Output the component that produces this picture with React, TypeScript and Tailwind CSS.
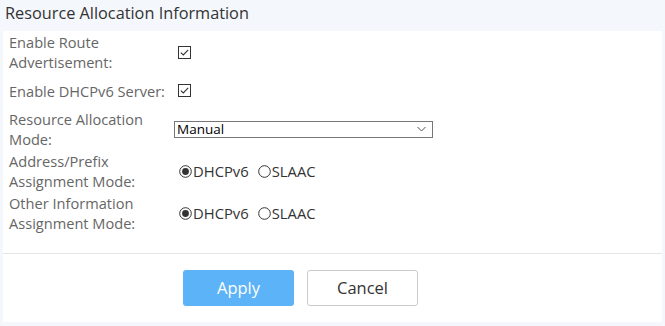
const FONT = { fontFamily: '"Open Sans", "Noto Sans", Arial, sans-serif' };

function CheckBox() {
  return (
    <svg width="13" height="13" viewBox="0 0 13 13" className="block">
      <rect x="0.5" y="0.5" width="12" height="12" fill="#fff" stroke="#333" />
      <path d="M2.8 6.6 L5.3 9 L10.2 3.8" fill="none" stroke="#333" strokeWidth="1.1" />
    </svg>
  );
}

function Radio({ checked }: { checked?: boolean }) {
  return (
    <svg width="13" height="13" viewBox="0 0 13 13" className="block">
      <circle cx="6.5" cy="6.5" r="5.8" fill="#fff" stroke="#333" strokeWidth="1" />
      {checked && <circle cx="6.5" cy="6.5" r="3.4" fill="#333" />}
    </svg>
  );
}

function Row({ label, h, className = "", children }: { label: string[]; h: string; className?: string; children: React.ReactNode }) {
  return (
    <div className={`flex items-center ${h} ${className}`}>
      <div className="w-[166px] pl-[6px] text-[14.6px] leading-[20px] text-[#666]">
        {label.map((l) => (
          <div key={l}>{l}</div>
        ))}
      </div>
      <div className="flex items-center">{children}</div>
    </div>
  );
}

function RadioGroup() {
  return (
    <div className="flex items-center text-[14.8px] text-[#333] pl-[10px]">
      <Radio checked />
      <span className="ml-[1px]">DHCPv6</span>
      <span className="ml-[9px]"><Radio /></span>
      <span className="ml-[1px]">SLAAC</span>
    </div>
  );
}

export default function App() {
  return (
    <div className="w-[665px] h-[326px] bg-[#f4f7fc] overflow-hidden" style={FONT}>
      <div className="h-[31px] pl-[5px] pt-[1px] text-[16.3px] leading-[24px] text-[#333]">
        Resource Allocation Information
      </div>
      <div className="ml-[3px] w-[659px] h-[291px] bg-white">
        <div className="pt-[1px]">
          <Row label={["Enable Route", "Advertisement:"]} h="h-[40px]">
            <span className="pl-[9px]"><CheckBox /></span>
          </Row>
          <Row label={["Enable DHCPv6 Server:"]} h="h-[37px]">
            <span className="pl-[9px]"><CheckBox /></span>
          </Row>
          <Row label={["Resource Allocation", "Mode:"]} h="h-[40px]">
            <div className="ml-[5px] w-[259px] h-[17px] border border-[#767676] flex items-center justify-between pl-[2px] pr-[6px] text-[13.5px] leading-[15px] text-black">
              <span>Manual</span>
              <svg width="9" height="6" viewBox="0 0 9 6">
                <path d="M0.5 1 L4.5 5 L8.5 1" fill="none" stroke="#555" strokeWidth="1" />
              </svg>
            </div>
          </Row>
          <Row label={["Address/Prefix", "Assignment Mode:"]} h="h-[40px]" className="mt-[2px]">
            <RadioGroup />
          </Row>
          <Row label={["Other Information", "Assignment Mode:"]} h="h-[40px]" className="mt-[2px]">
            <RadioGroup />
          </Row>
        </div>
        <div className="mt-[20px] border-t border-[#e5e5e5]" />
        <div className="flex pl-[180px] pt-[16px] gap-[13px]">
          <button className="w-[111px] h-[36px] rounded-[3px] bg-[#5cb3f8] text-white text-[16.5px]">Apply</button>
          <button className="w-[111px] h-[36px] rounded-[3px] border border-[#cccccc] bg-white text-[#333] text-[16.5px]">Cancel</button>
        </div>
      </div>
    </div>
  );
}
